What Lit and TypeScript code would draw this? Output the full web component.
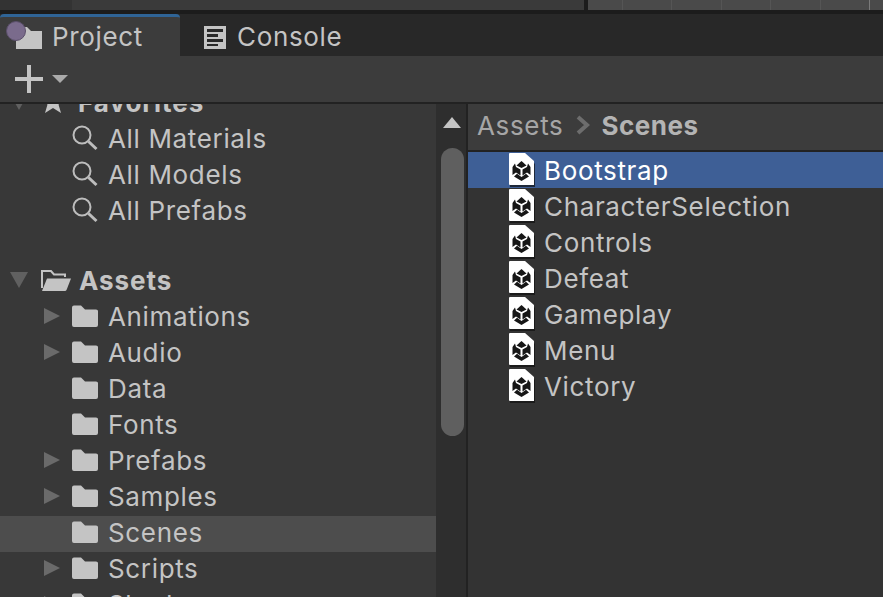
import { LitElement, html, css, svg } from "lit";
import { customElement } from "lit/decorators.js";

const folder = html`<svg class="ic folder" width="28" height="24" viewBox="0 0 28 24"><path fill="#c4c4c4" d="M1 3.500Q1 1.500 3 1.500H10L14 5.500H25Q27 5.500 27 7V21Q27 23 25 23H3Q1 23 1 21Z"/></svg>`;
const openFolder = html`<svg class="ic" width="32" height="24" viewBox="0 0 32 24"><path fill="none" stroke="#c4c4c4" stroke-width="2" d="M2 20V3H11L14 6.500H25V9"/><path fill="#c4c4c4" d="M2 23L7 10.500H31L26.500 22Q26 23 25 23Z"/></svg>`;
const search = html`<svg class="ic" width="28" height="28" viewBox="0 0 28 28"><circle cx="11" cy="11" r="8.500" fill="none" stroke="#bdbdbd" stroke-width="2"/><path d="M17.500 17.500L25.500 25" stroke="#bdbdbd" stroke-width="3"/></svg>`;
const sceneIcon = svg`<svg class="scene" width="30" height="36" viewBox="0 0 30 36"><path fill="#111" d="M3 3H19L28 12V35H3Z" opacity=".7"/><path fill="#fff" d="M3 1H18L27 9V33H3Q2 33 2 32V2Q2 1 3 1Z"/><path fill="#161616" d="M14.500 9L19.500 13.500L14.500 16L9.500 13.500Z"/><path fill="#161616" d="M8 11.500L9 15L13.500 17.500V23.500L9 20.500L5.500 23V15ZM21 11.500L20 15L15.500 17.500V23.500L20 20.500L23.500 23V15Z"/><path fill="#161616" d="M7 24.500L10 21.800L14.500 25L19 21.800L22 24.500L14.500 29Z"/></svg>`;

const tri = (dir: "down" | "right" | "none") => html`<span class="arrow ${dir}"></span>`;

@customElement("app-root")
export class AppRoot extends LitElement {
  static styles = css`
    :host {
      display: block;
      position: relative;
      width: 883px;
      height: 597px;
      overflow: hidden;
      background: #282828;
      font-family: Inter, "Liberation Sans", sans-serif;
      color: #c4c4c4;
      font-size: 26px;
      letter-spacing: 0.65px;
    }
    .strip { height: 10px; display: flex; }
    .strip .a { flex: none; width: 72px; background: #333; }
    .strip .b { flex: none; width: 512px; background: #3a3a3a; }
    .strip .notch { flex: none; width: 4px; background: #1c1c1c; }
    .strip .c { flex: 1; min-width: 0; overflow: hidden; display: flex; background: #4a4a4a; }
    .cell { width: 49.400px; box-sizing: border-box; border-right: 1px solid #555; flex: none; }
    .cell.first { width: 35px; }
    .cell.hi { border-right-color: #7a7a7a; }
    .gap { height: 4px; background: #1c1c1c; }
    .tabs { height: 42px; display: flex; background: #282828; }
    .tab { display: flex; align-items: center; height: 42px; box-sizing: border-box; }
    .tab.active {
      width: 180px;
      background: #3c3c3c;
      border-top: 3px solid #2f6496;
      border-radius: 4px 4px 0 0;
      padding-left: 15px;
      gap: 9px;
    }
    .tab.console { padding: 3px 0 0 24px; gap: 11px; }
    .toolbar {
      height: 46px;
      background: #3c3c3c;
      border-bottom: 2px solid #222;
      display: flex;
      align-items: center;
      padding-left: 15px;
      gap: 9px;
    }
    .plusdown { width: 0; height: 0; border-left: 8px solid transparent; border-right: 8px solid transparent; border-top: 8px solid #aaa; }
    .main { display: flex; height: 493px; }
    .tree { width: 436px; background: #383838; overflow: hidden; }
    .inner { margin-top: -18px; }
    .row { height: 36px; box-sizing: border-box; padding-bottom: 4px; display: flex; align-items: center; white-space: nowrap; }
    .row.blank { height: 34px; }
    .row.sel { background: #4d4d4d; }
    .row.l1 { padding-left: 44px; }
    .row.l0 { padding-left: 10px; }
    .row.sr { padding-left: 71px; }
    .arrow { flex: none; display: block; width: 0; height: 0; }
    .arrow.right { border-top: 8px solid transparent; border-bottom: 8px solid transparent; border-left: 16px solid #6a6a6a; margin-right: 11px; }
    .arrow.none { width: 27px; }
    .arrow.down { border-left: 9px solid transparent; border-right: 9px solid transparent; border-top: 16px solid #606060; margin-right: 12px; }
    .ic { flex: none; }
    .name { margin-left: 8px; }
    .folder + .name { margin-left: 9px; }
    .sr .name { margin-left: 9px; }
    .bold { font-weight: 700; letter-spacing: 0.95px; margin-left: 7px; }
    .bold.fav { margin-left: 12px; }
    .scroll { width: 28px; padding-left: 2px; background: #2e2e2e; border-right: 2px solid #222; display: flex; flex-direction: column; align-items: center; }
    .up { width: 0; height: 0; border-left: 9px solid transparent; border-right: 9px solid transparent; border-bottom: 11px solid #c4c4c4; margin-top: 13px; }
    .thumb { width: 23px; height: 288px; background: #5f5f5f; border-radius: 12px; margin-top: 20px; }
    .files { flex: 1; background: #333; }
    .crumb { height: 42px; background: #3c3c3c; border-bottom: 2px solid #222; display: flex; align-items: center; padding: 0 0 4px 9px; color: #a6a6a6; gap: 13px; }
    .crumb b { color: #b4b4b4; font-weight: 700; letter-spacing: 0.5px; margin-left: -2px; }
    .item { height: 36px; display: flex; align-items: center; padding-left: 39px; gap: 7px; }
    .item.on { background: #3e5f96; color: #fff; }
    .scene { flex: none; }
    .dot { position: absolute; left: 6px; top: 21px; width: 18px; height: 18px; border-radius: 50%; background: #7a6b8c; border: 1px solid #5b4f6b; }
  `;

  render() {
    const tree: [string, boolean][] = [
      ["Animations", true],
      ["Audio", true],
      ["Data", false],
      ["Fonts", false],
      ["Prefabs", true],
      ["Samples", true],
      ["Scenes", false],
      ["Scripts", true],
      ["Shaders", true],
    ];
    const scenes = ["Bootstrap", "CharacterSelection", "Controls", "Defeat", "Gameplay", "Menu", "Victory"];
    return html`
      <div class="strip">
        <div class="a"></div><div class="b"></div><div class="notch"></div>
        <div class="c">
          <div class="cell first"></div><div class="cell"></div><div class="cell"></div><div class="cell"></div><div class="cell"></div><div class="cell hi"></div><div class="cell"></div>
        </div>
      </div>
      <div class="gap"></div>
      <div class="tabs">
        <div class="tab active">
          <svg width="28" height="24" viewBox="0 0 28 24"><path fill="#c4c4c4" d="M1 2H12L16 6H27V24H1Z"/></svg>
          <span>Project</span>
        </div>
        <div class="tab console">
          <svg width="22" height="24" viewBox="0 0 22 24"><path fill="#c4c4c4" fill-rule="evenodd" d="M0 1H22V24H0ZM3 4V7H19V4ZM3 9V12H14V9ZM3 14V17H19V14ZM3 19V21H14V19Z"/></svg>
          <span>Console</span>
        </div>
      </div>
      <div class="toolbar">
        <svg width="28" height="28" viewBox="0 0 28 28"><path fill="#c4c4c4" d="M12 0H16V12H28V16H16V28H12V16H0V12H12Z"/></svg>
        <span class="plusdown"></span>
      </div>
      <div class="main">
        <div class="tree"><div class="inner">
          <div class="row l0">${tri("down")}
            <svg class="ic" width="26" height="24" viewBox="0 0 26 24"><path fill="#c4c4c4" d="M13 1L16.500 9H25L18.500 14.500L21 23L13 18L5 23L7.500 14.500L1 9H9.500Z"/></svg>
            <span class="name bold fav">Favorites</span></div>
          ${["All Materials", "All Models", "All Prefabs"].map(
            (n) => html`<div class="row sr">${search}<span class="name">${n}</span></div>`
          )}
          <div class="row blank"></div>
          <div class="row l0">${tri("down")}${openFolder}<span class="name bold">Assets</span></div>
          ${tree.map(
            ([n, a]) => html`<div class="row l1 ${n === "Scenes" ? "sel" : ""}">${tri(a ? "right" : "none")}${folder}<span class="name">${n}</span></div>`
          )}
        </div></div>
        <div class="scroll"><span class="up"></span><div class="thumb"></div></div>
        <div class="files">
          <div class="crumb">
            <span>Assets</span>
            <svg width="14" height="20" viewBox="0 0 14 20"><path d="M2 2L11 10L2 18" fill="none" stroke="#6d6d6d" stroke-width="4"/></svg>
            <b>Scenes</b>
          </div>
          ${scenes.map(
            (n, i) => html`<div class="item ${i === 0 ? "on" : ""}">${sceneIcon}<span>${n}</span></div>`
          )}
        </div>
      </div>
      <div class="dot"></div>
    `;
  }
}
